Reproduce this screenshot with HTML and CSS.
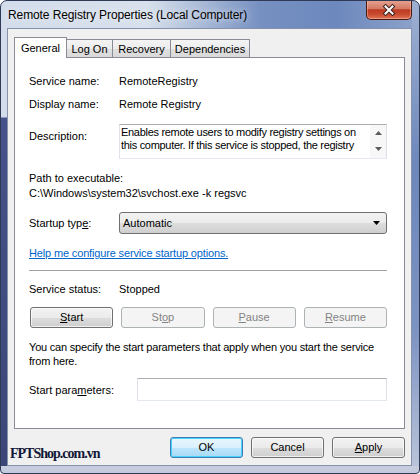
FILE: index.html
```html
<!DOCTYPE html>
<html lang="en">
<head>
    <meta charset="UTF-8">
    <meta name="viewport" content="width=device-width, initial-scale=1.0">
    <title>Remote Registry Properties (Local Computer)</title>
    <link rel="stylesheet" href="styles.css">
</head>
<body>

<div class="window">
    <!-- Title bar -->
    <div class="titlebar">
        <span class="title">Remote Registry Properties (Local Computer)</span>
        <div class="close-btn">
            <svg width="14" height="12" viewBox="0 0 14 12">
                <path d="M3.5 2.5 L10.5 9.5 M10.5 2.5 L3.5 9.5" stroke="#3d2522" stroke-width="4" stroke-linecap="square"/>
                <path d="M3.5 2.5 L10.5 9.5 M10.5 2.5 L3.5 9.5" stroke="#ffffff" stroke-width="2" stroke-linecap="square"/>
            </svg>
        </div>
    </div>

    <div class="client">
        <!-- Tabs -->
        <div class="tabs">
            <div class="tab active tab-general">General</div>
            <div class="tab tab-logon">Log On</div>
            <div class="tab tab-recovery">Recovery</div>
            <div class="tab tab-deps">Dependencies</div>
        </div>

        <!-- General page -->
        <div class="panel">
            <div class="field">
                <span class="label">Service name:</span>
                <span>RemoteRegistry</span>
            </div>
            <div class="field field-display">
                <span class="label">Display name:</span>
                <span>Remote Registry</span>
            </div>
            <div class="field field-desc">
                <span class="label label-desc">Description:</span>
                <div class="desc-box">
                    <div class="desc-text">Enables remote users to modify registry settings on<br>this computer. If this service is stopped, the registry</div>
                    <div class="desc-scroll">
                        <svg width="7" height="4" viewBox="0 0 7 4"><path d="M0 4 L3.5 0 L7 4 Z" fill="#5b5b5b"/></svg>
                        <svg width="7" height="4" viewBox="0 0 7 4"><path d="M0 0 L3.5 4 L7 0 Z" fill="#5b5b5b"/></svg>
                    </div>
                </div>
            </div>
            <div class="path">
                Path to executable:<br>
                C:\Windows\system32\svchost.exe -k regsvc
            </div>
            <div class="field field-startup">
                <span class="label">Startup typ<u>e</u>:</span>
                <div class="select">
                    <span>Automatic</span>
                    <svg width="7" height="4" viewBox="0 0 7 4"><path d="M0 0 L3.5 4 L7 0 Z" fill="#000"/></svg>
                </div>
            </div>
            <a class="help-link" href="#">Help me configure service startup options.</a>
            <div class="separator"></div>
            <div class="field field-status">
                <span class="label">Service status:</span>
                <span>Stopped</span>
            </div>
            <div class="service-buttons">
                <div class="btn"><u>S</u>tart</div>
                <div class="btn disabled">St<u>o</u>p</div>
                <div class="btn disabled"><u>P</u>ause</div>
                <div class="btn disabled"><u>R</u>esume</div>
            </div>
            <p class="hint">You can specify the start parameters that apply when you start the service<br>from here.</p>
            <div class="field field-params">
                <span class="label label-params">Start para<u>m</u>eters:</span>
                <div class="textbox"></div>
            </div>
        </div>

        <!-- Dialog buttons -->
        <div class="dialog-buttons">
            <div class="btn btn-dialog default">OK</div>
            <div class="btn btn-dialog">Cancel</div>
            <div class="btn btn-dialog"><u>A</u>pply</div>
        </div>

        <div class="watermark">FPTShop.com.vn</div>
    </div>
</div>

</body>
</html>
```

FILE: styles.css
```css
/* base */
body {
    margin: 0;
    font-family: "Liberation Sans", Arial, sans-serif;
    font-size: 11px;
    color: #000;
}
u {
    text-decoration: underline;
}

/* window frame */
.window {
    width: 420px;
    height: 474px;
    box-sizing: border-box;
    border: 1px solid #2f3a57;
    border-radius: 7px 7px 4px 4px;
    padding: 0 7px 7px 6px;
    display: flex;
    flex-direction: column;
    overflow: hidden;
    background:
        linear-gradient(#c8cedf, #c3cadc) left bottom / 100% 7px no-repeat,
        linear-gradient(to bottom, transparent 116px, #46528a 117px, #3c4676 100%) left top / 6px 100% no-repeat,
        linear-gradient(to bottom, #9fb1d2 0%, #6d87bb 35%, #7d93c2 70%, #bcc6da 100%) right top / 7px 100% no-repeat,
        linear-gradient(to right, #d3dcea 0%, #d7e0ec 35%, #a9bad7 48%, #7690c1 62%, #6c88bd 80%, #8ea3cb 100%);
}

.titlebar {
    height: 27px;
    display: flex;
    align-items: center;
    flex-shrink: 0;
}
.title {
    font-size: 12px;
    letter-spacing: -0.1px;
    padding-left: 1px;
    padding-top: 1px;
    color: #000;
    text-shadow: 0 0 6px rgba(255, 255, 255, 0.9);
}
.close-btn {
    margin-left: auto;
    align-self: flex-start;
    margin-top: -1px;
    width: 46px;
    height: 20px;
    box-sizing: border-box;
    border: 1px solid #4a1a12;
    border-top: none;
    border-radius: 0 0 5px 5px;
    background: linear-gradient(to bottom, #e6a493 0%, #d57a64 45%, #bd3b22 52%, #c74a30 75%, #e07658 100%);
    box-shadow: inset 0 0 0 1px rgba(255, 200, 180, 0.45);
    display: flex;
    align-items: center;
    justify-content: center;
}

/* client area */
.client {
    flex: 1;
    position: relative;
    background: #f0f0f0;
    border: 1px solid #8592aa;
    padding: 8px 6px 0 6px;
}

/* tabs */
.tabs {
    display: flex;
    align-items: flex-end;
    height: 20px;
}
.tab {
    box-sizing: border-box;
    height: 18px;
    border: 1px solid #898c95;
    border-bottom: none;
    border-left: none;
    background: linear-gradient(to bottom, #f4f4f4 0%, #ececec 50%, #e0e0e0 51%, #d9d9d9 100%);
    text-align: center;
    line-height: 18px;
}
.tab-general {
    width: 53px;
    border-left: 1px solid #898c95;
}
.tab-logon {
    width: 46px;
}
.tab-recovery {
    width: 58px;
}
.tab-deps {
    width: 79px;
}
.tab.active {
    height: 21px;
    margin-bottom: -1px;
    background: #fff;
    line-height: 20px;
    position: relative;
    z-index: 1;
}

.panel {
    height: 372px;
    box-sizing: border-box;
    background: #fff;
    border: 1px solid #898c95;
    padding: 16px 17px 0 14px;
}

/* label / value rows */
.field {
    display: flex;
    align-items: center;
    line-height: 14px;
}
.label {
    width: 90px;
    flex-shrink: 0;
}
.field-display {
    margin-top: 9px;
}
.field-desc {
    margin-top: 13px;
    align-items: flex-start;
}
.label-desc {
    padding-top: 5px;
}
.desc-box {
    flex: 1;
    height: 35px;
    box-sizing: border-box;
    border: 1px solid;
    border-color: #abadb3 #dbdfe6 #e3e9ef #e2e3ea;
    display: flex;
}
.desc-text {
    flex: 1;
    padding: 1px 0 0 1px;
    line-height: 13px;
    letter-spacing: -0.3px;
    overflow: hidden;
    white-space: nowrap;
}
.desc-scroll {
    width: 16px;
    background: #f7f7f7;
    display: flex;
    flex-direction: column;
    align-items: center;
    justify-content: space-between;
    padding: 6px 0 7px;
    box-sizing: border-box;
}

.path {
    margin-top: 12px;
    line-height: 15px;
}

.field-startup {
    margin-top: 11px;
}
.select {
    flex: 1;
    height: 22px;
    box-sizing: border-box;
    border: 1px solid #707070;
    border-radius: 3px;
    background: linear-gradient(to bottom, #f2f2f2 0%, #ebebeb 50%, #dddddd 51%, #cfcfcf 100%);
    display: flex;
    align-items: center;
    justify-content: space-between;
    padding: 0 6px 0 3px;
}

.help-link {
    display: block;
    margin-top: 12px;
    line-height: 14px;
    letter-spacing: -0.15px;
    color: #0066cc;
    text-decoration: underline;
}

.separator {
    margin-top: 10px;
    height: 1px;
    background: #a0a0a0;
}

.field-status {
    margin-top: 11px;
}

/* buttons */
.btn {
    box-sizing: border-box;
    height: 21px;
    border: 1px solid #707070;
    border-radius: 3px;
    background: linear-gradient(to bottom, #f2f2f2 0%, #ebebeb 50%, #dddddd 51%, #cfcfcf 100%);
    box-shadow: inset 0 0 0 1px rgba(255, 255, 255, 0.7);
    text-align: center;
    line-height: 19px;
}
.btn.disabled {
    border-color: #adb2b5;
    background: #f4f4f4;
    box-shadow: none;
    color: #838383;
}
.service-buttons {
    margin-top: 11px;
    margin-left: 1px;
    display: grid;
    grid-template-columns: repeat(4, 1fr);
    gap: 8px;
}

.hint {
    margin: 12px 0 0;
    line-height: 14px;
    letter-spacing: -0.2px;
    white-space: nowrap;
}

.field-params {
    margin-top: 10px;
}
.label-params {
    width: 108px;
}
.textbox {
    flex: 1;
    height: 23px;
    box-sizing: border-box;
    border: 1px solid;
    border-color: #abadb3 #dbdfe6 #e3e9ef #e2e3ea;
    background: #fff;
}

/* bottom buttons */
.dialog-buttons {
    margin-top: 8px;
    display: flex;
    justify-content: flex-end;
    gap: 8px;
}
.btn-dialog {
    width: 73px;
}
.btn.default {
    border-color: #3c7fb1;
    background: linear-gradient(to bottom, #eaf6fd 0%, #d9f0fc 50%, #bee6fd 51%, #a7d9f5 100%);
    box-shadow: inset 0 0 0 1px #48d0ff;
}

/* watermark */
.watermark {
    position: absolute;
    left: 2px;
    bottom: 3px;
    font-family: "Liberation Serif", "Times New Roman", serif;
    font-weight: bold;
    font-size: 14px;
    letter-spacing: -1px;
    line-height: 16px;
    color: #121838;
}
```
